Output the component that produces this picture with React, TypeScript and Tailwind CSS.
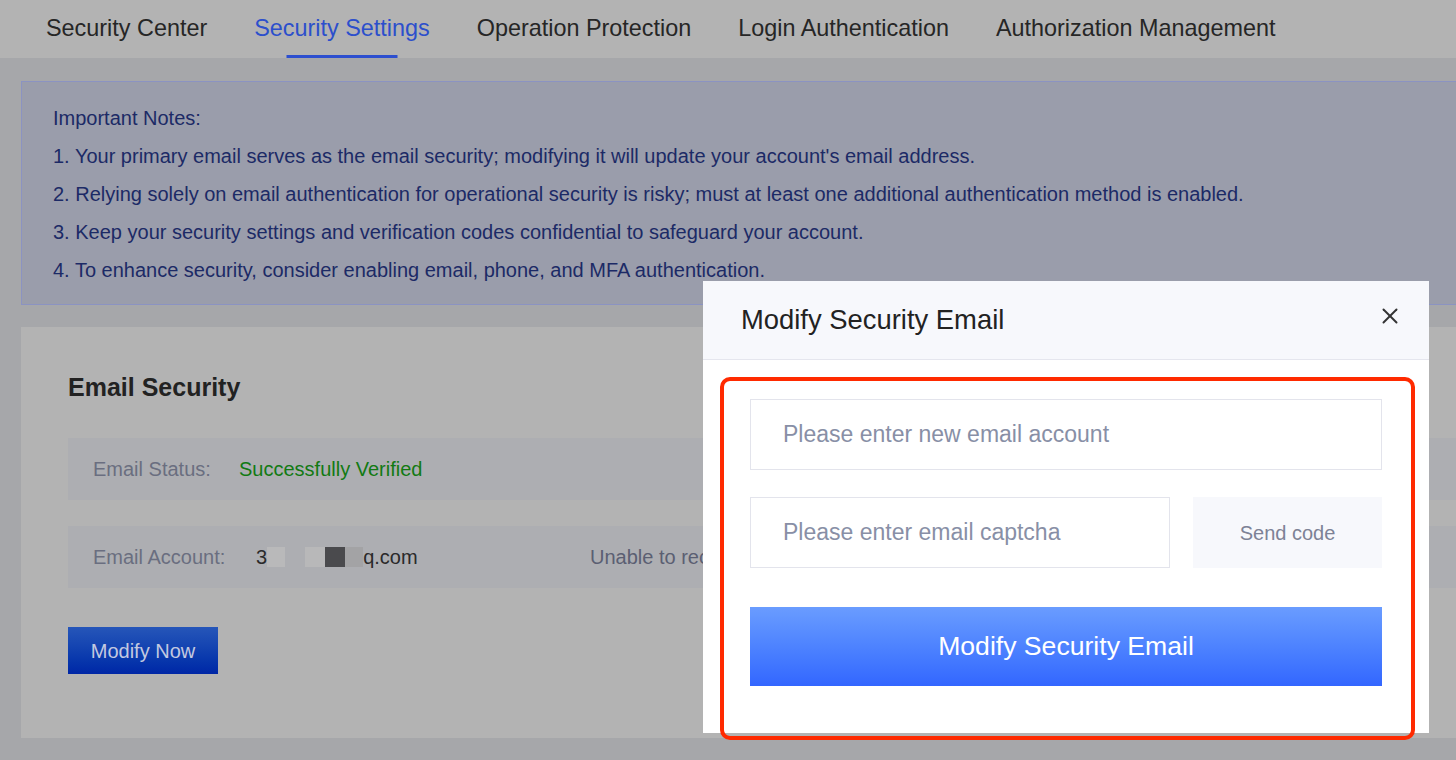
import { X } from "lucide-react";

const tabs = [
  "Security Center",
  "Security Settings",
  "Operation Protection",
  "Login Authentication",
  "Authorization Management",
];

const notes = [
  "1. Your primary email serves as the email security; modifying it will update your account's email address.",
  "2. Relying solely on email authentication for operational security is risky; must at least one additional authentication method is enabled.",
  "3. Keep your security settings and verification codes confidential to safeguard your account.",
  "4. To enhance security, consider enabling email, phone, and MFA authentication.",
];

const App = () => {
  return (
    <div
      className="relative w-[1456px] h-[760px] overflow-hidden bg-[#a6a7aa]"
      style={{ fontFamily: '"Liberation Sans", Arial, sans-serif' }}
    >
      {/* Tabs */}
      <div className="h-[58px] bg-[#b3b3b3] flex pl-[46px] gap-[47px]">
        {tabs.map((tab, index) => (
          <div key={index} className="relative h-full flex items-center">
            <span
              className={
                index === 1
                  ? "text-[23.4px] text-[#2c4fcc]"
                  : "text-[23.4px] text-[#262626]"
              }
            >
              {tab}
            </span>
            {index === 1 && (
              <div className="absolute bottom-0 left-1/2 -translate-x-1/2 w-[111px] h-[3px] bg-[#2d4fcf]" />
            )}
          </div>
        ))}
      </div>

      <div className="pl-[21px] pt-[23px] -mr-[20px]">
        {/* Important Notes */}
        <div className="border border-[#8b93c2] bg-[#9a9dab] pl-[31px] pt-[17px] pb-[15px] text-[20px] leading-[38px] text-[#1c2a66]">
          <p>Important Notes:</p>
          {notes.map((note, index) => (
            <p key={index}>{note}</p>
          ))}
        </div>

        {/* Email Security */}
        <div className="mt-[22px] h-[411px] bg-[#b3b3b3] pl-[47px] pt-[44px]">
          <h2 className="text-[25px] leading-[32px] font-bold text-[#222222]">Email Security</h2>

          <div className="mt-[35px] h-[62px] bg-[#adaeb2] flex items-center pl-[25px] text-[20px]">
            <span className="w-[146px] text-[#6a6e80]">Email Status:</span>
            <span className="text-[#127a12]">Successfully Verified</span>
          </div>

          <div className="mt-[26px] h-[62px] bg-[#adaeb2] flex items-center pl-[25px] text-[20px]">
            <span className="w-[163px] text-[#6a6e80]">Email Account:</span>
            <span className="w-[334px] flex items-center text-[#2a2a2a]">
              3
              <span className="inline-block w-[18px] h-[20px] bg-[#b9b9ba]" />
              <span className="inline-block w-[20px] h-[20px]" />
              <span className="inline-block w-[20px] h-[20px] bg-[#b8b8b9]" />
              <span className="inline-block w-[20px] h-[20px] bg-[#4a4a4d]" />
              <span className="inline-block w-[18px] h-[20px] bg-[#a3a3a5]" />
              q.com
            </span>
            <span className="text-[#5b5f72] whitespace-nowrap">Unable to receive the verification email?</span>
          </div>

          <button className="mt-[39px] w-[150px] h-[47px] bg-gradient-to-b from-[#2656b9] to-[#0026a6] text-[20px] text-[#c3c9e0]">
            Modify Now
          </button>
        </div>
      </div>

      {/* Modal */}
      <div className="absolute left-[703px] top-[281px] w-[726px] h-[452px] bg-white">
        <div className="h-[79px] bg-[#f7f8fc] border-b border-[#e5e6ee] flex items-center justify-between pl-[38px] pr-[26px]">
          <h3 className="text-[27.4px] text-[#222222]">Modify Security Email</h3>
          <X className="w-[26px] h-[26px] text-[#333333] -mt-[8px]" strokeWidth={1.8} />
        </div>

        <div className="px-[47px] pt-[39px]">
          <input
            className="w-full h-[71px] border border-[#e3e4ec] pl-[32px] text-[23px] outline-none placeholder:text-[#888fa6]"
            placeholder="Please enter new email account"
          />
          <div className="mt-[27px] flex gap-[23px]">
            <input
              className="w-[420px] h-[71px] border border-[#e3e4ec] pl-[32px] text-[23px] outline-none placeholder:text-[#888fa6]"
              placeholder="Please enter email captcha"
            />
            <button className="flex-1 h-[71px] bg-[#f7f8fc] text-[20px] text-[#7d8296]">Send code</button>
          </div>
          <button className="mt-[39px] w-full h-[79px] bg-gradient-to-b from-[#6a9cff] to-[#3366ff] text-[26.6px] text-white">
            Modify Security Email
          </button>
        </div>

        {/* highlight annotation */}
        <div className="absolute left-[17px] top-[96px] w-[695px] h-[363px] border-[4px] border-[#ff2a00] rounded-[10px] pointer-events-none" />
      </div>
    </div>
  );
};

export default App;
